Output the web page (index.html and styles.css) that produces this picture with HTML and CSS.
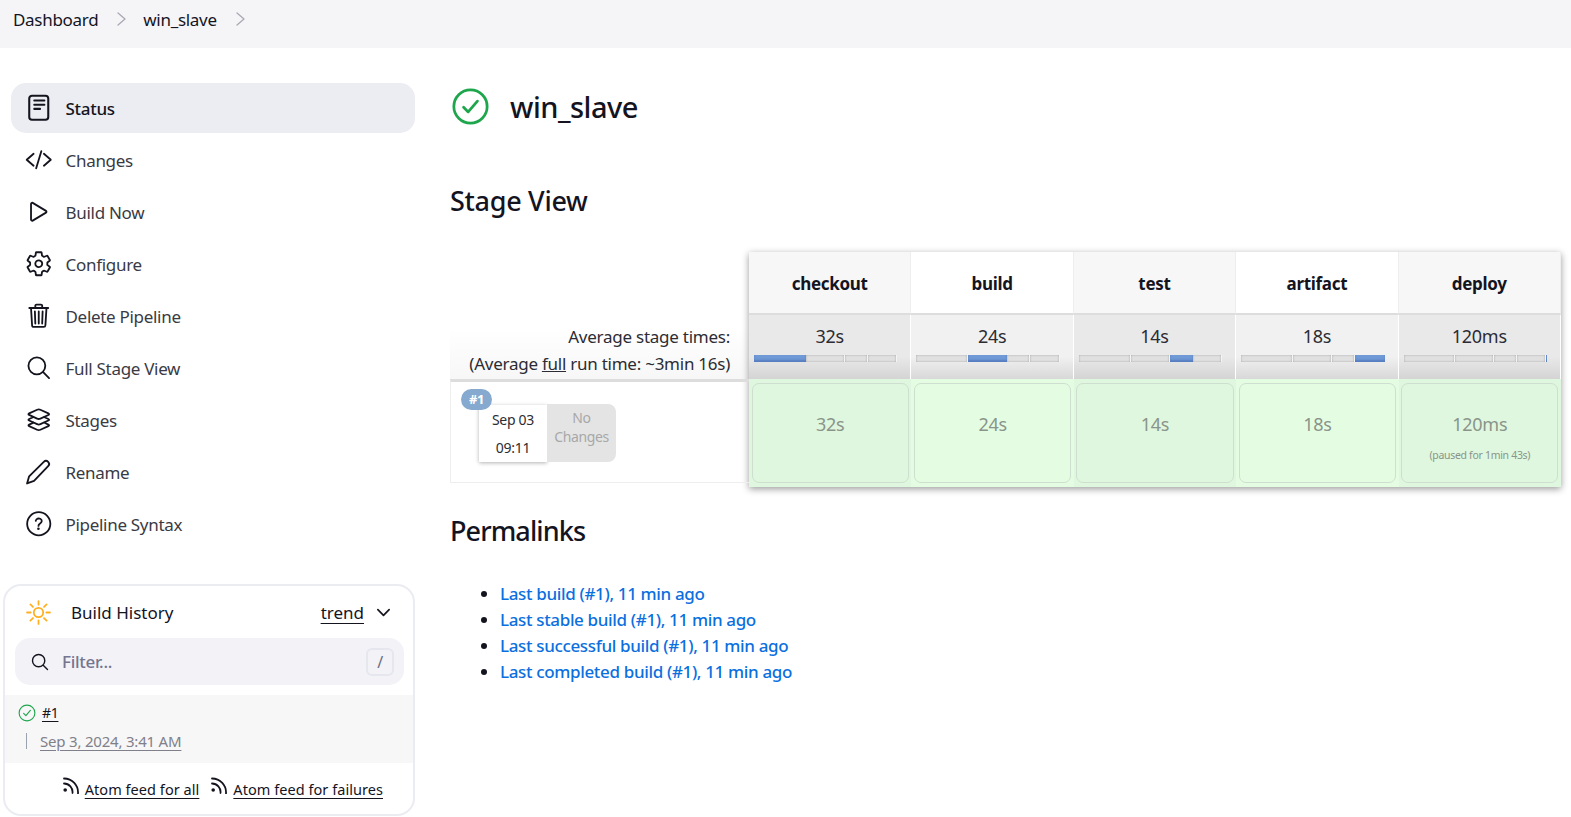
FILE: index.html
```html
<!DOCTYPE HTML>
<html>
    <head>
        <meta charset="utf-8">
        <title>win_slave</title>
        <link rel="stylesheet" href="styles.css">
    </head>

    <body>
        <div class="breadcrumbs">
            <a class="crumb">Dashboard</a>
            <svg class="crumb-arrow" viewBox="0 0 12 16"><path d="M3 2l7 6-7 6"/></svg>
            <a class="crumb">win_slave</a>
            <svg class="crumb-arrow" viewBox="0 0 12 16"><path d="M3 2l7 6-7 6"/></svg>
        </div>

        <div class="page">
            <div class="sidebar">
                <div class="tasks">
                    <a class="task active">
                        <svg class="task-icon" viewBox="0 0 24 24"><rect x="3.700" y="1.500" width="16.600" height="21" rx="2.400"/><path d="M8.100 5.700h8.800M8.100 9.300h8.800M8.100 13h5"/></svg>
                        Status
                    </a>
                    <a class="task">
                        <svg class="task-icon" viewBox="0 0 512 512"><path d="M160 368L32 256l128-112M352 368l128-112-128-112M304 96l-96 320"/></svg>
                        Changes
                    </a>
                    <a class="task">
                        <svg class="task-icon" viewBox="0 0 512 512"><path d="M112 111v290c0 17.44 17 28.52 31 20.16l247.9-148.37c12.12-7.25 12.12-26.33 0-33.58L143 90.84c-14-8.36-31 2.72-31 20.16z"/></svg>
                        Build Now
                    </a>
                    <a class="task">
                        <svg class="task-icon" viewBox="0 0 512 512"><path d="M262.29 192.31a64 64 0 1057.4 57.4 64.13 64.13 0 00-57.4-57.4zM416.39 256a154.34 154.34 0 01-1.53 20.79l45.21 35.46a10.81 10.81 0 012.45 13.75l-42.77 74a10.81 10.81 0 01-13.14 4.59l-44.9-18.08a16.11 16.11 0 00-15.17 1.75A164.48 164.48 0 01325 400.8a15.94 15.94 0 00-8.82 12.14l-6.73 47.89a11.08 11.08 0 01-10.68 9.17h-85.54a11.11 11.11 0 01-10.69-8.87l-6.72-47.82a16.07 16.07 0 00-9-12.22 155.3 155.3 0 01-21.46-12.57 16 16 0 00-15.11-1.71l-44.89 18.07a10.81 10.81 0 01-13.14-4.58l-42.77-74a10.8 10.8 0 012.45-13.75l38.21-30a16.05 16.05 0 006-14.08c-.36-4.17-.58-8.33-.58-12.5s.21-8.27.58-12.35a16 16 0 00-6.07-13.94l-38.19-30A10.81 10.81 0 0149.48 186l42.77-74a10.81 10.81 0 0113.14-4.59l44.9 18.08a16.11 16.11 0 0015.17-1.75A164.48 164.48 0 01187 111.2a15.94 15.94 0 008.82-12.14l6.73-47.89A11.08 11.08 0 01213.23 42h85.54a11.11 11.11 0 0110.69 8.87l6.72 47.82a16.07 16.07 0 009 12.22 155.3 155.3 0 0121.46 12.57 16 16 0 0015.11 1.71l44.89-18.07a10.81 10.81 0 0113.14 4.58l42.77 74a10.8 10.8 0 01-2.45 13.75l-38.21 30a16.05 16.05 0 00-6.05 14.08c.33 4.14.55 8.3.55 12.47z"/></svg>
                        Configure
                    </a>
                    <a class="task">
                        <svg class="task-icon" viewBox="0 0 512 512"><path d="M112 112l20 320c.95 18.49 14.4 32 32 32h184c17.67 0 30.87-13.51 32-32l20-320M80 112h352M192 112V72a23.93 23.93 0 0124-24h80a23.93 23.93 0 0124 24v40M256 176v224M184 176l8 224M328 176l-8 224"/></svg>
                        Delete Pipeline
                    </a>
                    <a class="task">
                        <svg class="task-icon" viewBox="0 0 512 512"><path d="M221.09 64a157.09 157.09 0 10157.09 157.09A157.1 157.1 0 00221.09 64zM338.29 338.29L448 448"/></svg>
                        Full Stage View
                    </a>
                    <a class="task">
                        <svg class="task-icon" viewBox="0 0 512 512"><path d="M434.8 137.65l-149.36-68.1c-16.19-7.4-42.69-7.4-58.88 0L77.3 137.65c-17.6 8-17.6 21.09 0 29.09l148 67.5c16.89 7.7 44.69 7.7 61.58 0l148-67.5c17.52-8 17.52-21.1-.08-29.09zM160 308.52l-82.7 37.11c-17.6 8-17.6 21.1 0 29.1l148 67.5c16.89 7.69 44.69 7.69 61.58 0l148-67.5c17.6-8 17.6-21.1 0-29.1l-79.94-38.47M160 204.48l-82.8 37.16c-17.6 8-17.6 21.1 0 29.1l148 67.49c16.89 7.7 44.69 7.7 61.58 0l148-67.49c17.7-8 17.7-21.1.1-29.1L352 204.48"/></svg>
                        Stages
                    </a>
                    <a class="task">
                        <svg class="task-icon" viewBox="0 0 24 24"><path d="M1.800 22.200l1.800-6.200L16.400 3.300a2.600 2.600 0 0 1 3.800 3.800L7.900 20z"/></svg>
                        Rename
                    </a>
                    <a class="task">
                        <svg class="task-icon" viewBox="0 0 512 512"><circle cx="256" cy="256" r="216"/><path d="M200 202.29s.84-17.5 19.57-32.57C230.68 160.77 244 158.18 256 158c10.93-.14 20.69 1.67 26.53 4.45 10 4.76 29.47 16.38 29.47 41.09 0 26-17 37.81-36.37 50.8S251 281.43 251 296"/><circle class="dot" cx="250" cy="348" r="24"/></svg>
                        Pipeline Syntax
                    </a>
                </div>

                <div class="history">
                    <div class="history-head">
                        <svg class="sun" viewBox="0 0 24 24"><circle cx="12" cy="12" r="4.500"/><path d="M12 1v3.500M12 19.500V23M1 12h3.500M19.500 12H23M4.200 4.200l2.500 2.500M17.300 17.300l2.500 2.500M4.200 19.800l2.500-2.500M17.300 6.700l2.500-2.500"/></svg>
                        <span class="history-title">Build History</span>
                        <a class="trend">trend</a>
                        <svg class="chevron" viewBox="0 0 16 16"><path d="M2 5l6 6 6-6"/></svg>
                    </div>
                    <div class="filter">
                        <svg class="filter-icon" viewBox="0 0 512 512"><path d="M221.09 64a157.09 157.09 0 10157.09 157.09A157.1 157.1 0 00221.09 64zM338.29 338.29L448 448"/></svg>
                        <span class="filter-text">Filter...</span>
                        <span class="slash">/</span>
                    </div>
                    <div class="build-row">
                        <div class="build-top">
                            <svg class="check small" viewBox="0 0 24 24"><circle cx="12" cy="12" r="10.500"/><path d="M7.500 12.500l3 3 6-7"/></svg>
                            <a class="build-no">#1</a>
                        </div>
                        <div class="build-date"><a>Sep 3, 2024, 3:41 AM</a></div>
                    </div>
                    <div class="feeds">
                        <svg class="rss" viewBox="0 0 18 18"><circle cx="3.200" cy="14" r="1.800"/><path d="M2 7.500a8.500 8.500 0 0 1 8.500 9.500M2 2.500a14 14 0 0 1 14 15"/></svg>
                        <a class="feed">Atom feed for all</a>
                        <svg class="rss" viewBox="0 0 18 18"><circle cx="3.200" cy="14" r="1.800"/><path d="M2 7.500a8.500 8.500 0 0 1 8.500 9.500M2 2.500a14 14 0 0 1 14 15"/></svg>
                        <a class="feed">Atom feed for failures</a>
                    </div>
                </div>
            </div>

            <div class="main">
                <div class="title-row">
                    <svg class="check big" viewBox="0 0 24 24"><circle cx="12" cy="12" r="10.800"/><path d="M7.500 12.500l3 3 6-7"/></svg>
                    <h1>win_slave</h1>
                </div>

                <h2 class="stage-heading">Stage View</h2>

                <div class="stage-view">
                    <div class="stage-left">
                        <div class="averages">
                            <div>Average stage times:</div>
                            <div>(Average <u>full</u> run time: ~3min 16s)</div>
                        </div>
                        <div class="run">
                            <span class="run-badge">#1</span>
                            <div class="run-date">
                                <div>Sep 03</div>
                                <div>09:11</div>
                            </div>
                            <div class="run-changes">No Changes</div>
                        </div>
                    </div>

                    <div class="stage-table">
                        <div class="stage-col odd">
                            <div class="stage-name">checkout</div>
                            <div class="stage-avg">
                                32s
                                <div class="bar"><span class="seg on" style="width:36.3%"></span><span class="seg" style="width:27.2%"></span><span class="seg" style="width:16%"></span><span class="seg" style="width:20.5%"></span></div>
                            </div>
                            <div class="stage-cell"><div class="cell-box">32s</div></div>
                        </div>
                        <div class="stage-col even">
                            <div class="stage-name">build</div>
                            <div class="stage-avg">
                                24s
                                <div class="bar"><span class="seg" style="width:36.3%"></span><span class="seg on" style="width:27.2%"></span><span class="seg" style="width:16%"></span><span class="seg" style="width:20.5%"></span></div>
                            </div>
                            <div class="stage-cell"><div class="cell-box">24s</div></div>
                        </div>
                        <div class="stage-col odd">
                            <div class="stage-name">test</div>
                            <div class="stage-avg">
                                14s
                                <div class="bar"><span class="seg" style="width:36.3%"></span><span class="seg" style="width:27.2%"></span><span class="seg on" style="width:16%"></span><span class="seg" style="width:20.5%"></span></div>
                            </div>
                            <div class="stage-cell"><div class="cell-box">14s</div></div>
                        </div>
                        <div class="stage-col even">
                            <div class="stage-name">artifact</div>
                            <div class="stage-avg">
                                18s
                                <div class="bar"><span class="seg" style="width:36.3%"></span><span class="seg" style="width:27.2%"></span><span class="seg" style="width:16%"></span><span class="seg on" style="width:20.5%"></span></div>
                            </div>
                            <div class="stage-cell"><div class="cell-box">18s</div></div>
                        </div>
                        <div class="stage-col odd">
                            <div class="stage-name">deploy</div>
                            <div class="stage-avg">
                                120ms
                                <div class="bar"><span class="seg" style="width:36%"></span><span class="seg" style="width:27%"></span><span class="seg" style="width:16%"></span><span class="seg" style="width:20.3%"></span><span class="seg on" style="width:1px"></span></div>
                            </div>
                            <div class="stage-cell">
                                <div class="cell-box">120ms<span class="paused">(paused for 1min 43s)</span></div>
                            </div>
                        </div>
                    </div>
                </div>

                <h2 class="permalinks-heading">Permalinks</h2>
                <ul class="permalinks">
                    <li><a>Last build (#1), 11 min ago</a></li>
                    <li><a>Last stable build (#1), 11 min ago</a></li>
                    <li><a>Last successful build (#1), 11 min ago</a></li>
                    <li><a>Last completed build (#1), 11 min ago</a></li>
                </ul>
            </div>
        </div>
    </body>
</html>
```

FILE: styles.css
```css
body{
    margin:0;
    background-color:#fff;
    color:#14141f;
    font-family:"Noto Sans", sans-serif;
    font-size:16px;
    letter-spacing:-0.3px;
}

svg{
    fill:none;
    stroke:currentColor;
    stroke-linecap:round;
    stroke-linejoin:round;
    flex:none;
}

.breadcrumbs{
    display:flex;
    align-items:center;
    height:48px;
    padding:0 0 10px 13px;
    box-sizing:border-box;
    background-color:#f5f5f8;
    font-size:17px;
}

.crumb-arrow{
    width:12px;
    height:16px;
    margin:0 16px 0 17px;
    color:#a9a9b4;
    stroke-width:1.3;
}

.page{
    display:flex;
}

.sidebar{
    width:430px;
    flex:none;
}

.tasks{
    display:flex;
    flex-direction:column;
    gap:2px;
    width:404px;
    margin:35px 0 35px 11px;
}

.task{
    display:flex;
    align-items:center;
    gap:13px;
    height:50px;
    padding-left:14px;
    border-radius:15px;
    color:#3a3a44;
    font-size:17px;
}

.task.active{
    background-color:#ecedf2;
    color:#14141f;
    font-weight:500;
}

.task-icon{
    width:27.500px;
    height:27.500px;
    stroke:#14141f;
    stroke-width:34;
}

.active .task-icon{
    stroke-width:1.800;
}

.task:nth-child(8) .task-icon{
    stroke-width:1.600;
}

.dot{
    fill:#14141f;
    stroke:none;
}

.history{
    width:412px;
    height:232px;
    margin-left:3px;
    border:2px solid #ebecf2;
    border-radius:18px;
    box-sizing:border-box;
}

.history-head{
    display:flex;
    align-items:center;
    height:52px;
    padding:0 22px 0 21px;
    font-size:17px;
    letter-spacing:0;
}

.sun{
    width:25px;
    height:25px;
    margin-right:20px;
    color:#ffb020;
    stroke-width:1.700;
}

.history-title{
    flex:1;
}

.trend{
    text-decoration:underline;
    text-underline-offset:4px;
}

.chevron{
    width:15px;
    height:15px;
    margin-left:12px;
    stroke-width:1.800;
}

.filter{
    display:flex;
    align-items:center;
    height:47px;
    margin:0 9px 10px 10px;
    padding:0 10px 0 15px;
    border-radius:15px;
    background-color:#f2f2f7;
}

.filter-icon{
    width:20px;
    height:20px;
    stroke-width:36;
}

.filter-text{
    flex:1;
    margin-left:12px;
    color:#75758f;
    font-size:17px;
    font-weight:500;
}

.slash{
    width:24px;
    height:24px;
    border:2px solid #e6e6ef;
    border-radius:6px;
    color:#6c6c80;
    font-size:16px;
    line-height:24px;
    text-align:center;
}

.build-row{
    height:68px;
    background-color:#f7f7f7;
    padding:7px 0 0 13px;
    box-sizing:border-box;
}

.build-top{
    display:flex;
    align-items:center;
    gap:6px;
    height:20px;
    font-size:14px;
}

.check.small{
    width:18px;
    height:18px;
    margin-top:2px;
    color:#1ea64d;
    stroke-width:1.500;
}

.build-no{
    text-decoration:underline;
    text-underline-offset:3px;
}

.build-date{
    margin:11px 0 0 8px;
    padding-left:13px;
    height:16px;
    border-left:1px solid #9aa3ad;
    color:#80808a;
    font-size:15px;
    letter-spacing:-0.2px;
    line-height:16px;
    text-decoration:underline;
    text-underline-offset:3px;
}

.feeds{
    display:flex;
    align-items:center;
    justify-content:flex-end;
    height:50px;
    padding:0 30px 6px 0;
    box-sizing:border-box;
    font-size:14.5px;
    letter-spacing:0.05px;
}

.feed{
    margin:7px 11px 0 5px;
    text-decoration:underline;
    text-underline-offset:3px;
}

.feed:last-child{
    margin-right:0;
}

.rss{
    width:18px;
    height:18px;
    stroke-width:1.800;
}

.rss circle{
    fill:currentColor;
    stroke:none;
}

.main{
    flex:1;
    padding:0 10px 0 20px;
    min-width:0;
}

.title-row{
    display:flex;
    align-items:center;
    gap:21px;
    height:48px;
    margin-top:34px;
    padding-left:2px;
}

.check.big{
    width:37px;
    height:37px;
    color:#1ea64d;
    stroke-width:1.800;
}

h1{
    margin:0;
    font-size:29px;
    font-weight:500;
    letter-spacing:-0.5px;
}

h2{
    margin:0;
    font-size:27px;
    font-weight:500;
    line-height:40px;
}

.stage-heading{
    margin:51px 0 31px;
}

.stage-view{
    display:flex;
    align-items:flex-start;
}

.stage-left{
    width:299px;
    flex:none;
}

.averages{
    display:flex;
    flex-direction:column;
    justify-content:flex-end;
    height:127px;
    padding:0 19px 2px 0;
    box-sizing:border-box;
    background:linear-gradient(to bottom, #fff 60%, #f7f7f7 100%);
    font-size:17px;
    letter-spacing:-0.25px;
    line-height:27px;
    text-align:right;
    color:#2c2c34;
}

.run{
    position:relative;
    display:flex;
    align-items:flex-start;
    height:104px;
    padding:23px 0 0 28px;
    box-sizing:border-box;
    border-top:3px solid #ddd;
    border-left:1px solid #eee;
    border-bottom:1px solid #eee;
}

.run-badge{
    position:absolute;
    left:10px;
    top:7px;
    width:31px;
    height:21px;
    border-radius:11px;
    background-color:#85a9cf;
    color:#fff;
    font-size:13px;
    font-weight:700;
    line-height:21px;
    text-align:center;
}

.run-date{
    width:68px;
    height:57px;
    padding-top:1px;
    box-sizing:border-box;
    background-color:#fff;
    box-shadow:0 1px 4px rgba(0,0,0,.3);
    font-size:14px;
    line-height:28px;
    text-align:center;
    color:#2c2c34;
}

.run-changes{
    width:69px;
    height:58px;
    margin-top:-1px;
    padding-top:4px;
    box-sizing:border-box;
    border-radius:0 8px 8px 0;
    background-color:#e4e4e4;
    color:#a8a8a8;
    font-size:14px;
    letter-spacing:-0.4px;
    line-height:19px;
    text-align:center;
}

.stage-table{
    display:grid;
    grid-template-columns:repeat(5, 1fr);
    width:813px;
    box-shadow:0 2px 7px rgba(0,0,0,.4);
}

.stage-name{
    display:flex;
    align-items:center;
    justify-content:center;
    height:63px;
    padding-top:2px;
    box-sizing:border-box;
    border-bottom:2px solid #ddd;
    border-right:1px solid #eee;
    font-size:17px;
    font-weight:700;
}

.odd .stage-name{
    background-color:#f7f7f7;
}

.even .stage-name{
    background-color:#fff;
}

.stage-avg{
    height:64px;
    padding-top:8px;
    box-sizing:border-box;
    border-right:1px solid #fff;
    font-size:18px;
    line-height:26px;
    text-align:center;
    color:#2c2c34;
}

.odd .stage-avg{
    background:linear-gradient(to bottom, #e9e9e9 65%, #d4d4d4 100%);
}

.even .stage-avg{
    background:linear-gradient(to bottom, #f1f1f1 65%, #d8d8d8 100%);
}

.bar{
    display:flex;
    height:7px;
    margin:6px 13px 0 5px;
}

.seg{
    box-sizing:border-box;
    border-right:1px solid #f4f4f4;
    background-color:#e0e0e0;
    box-shadow:inset 0 0 2px rgba(0,0,0,.3);
}

.seg.on{
    border-right:none;
    background-color:#6f9ad6;
    box-shadow:inset 0 -2px 2px rgba(50,80,160,.4);
}

.stage-cell{
    height:108px;
    padding:4px 2.500px;
    box-sizing:border-box;
}

.odd .stage-cell{
    background-color:#dff7de;
}

.even .stage-cell{
    background-color:#e4fde2;
}

.cell-box{
    height:100%;
    padding-top:27px;
    box-sizing:border-box;
    border:1px solid #cfdfcf;
    border-radius:7px;
    color:#8a948a;
    font-size:18px;
    line-height:26px;
    text-align:center;
}

.paused{
    display:block;
    margin-top:11px;
    font-size:10.5px;
    line-height:14px;
}

.permalinks-heading{
    margin-top:24px;
    letter-spacing:-0.9px;
}

.permalinks{
    margin:30px 0 0;
    padding-left:50px;
    color:#0b6fe0;
    font-size:17px;
    font-weight:500;
    letter-spacing:-0.35px;
    line-height:26px;
}

.permalinks li::marker{
    color:#14141f;
}
```
